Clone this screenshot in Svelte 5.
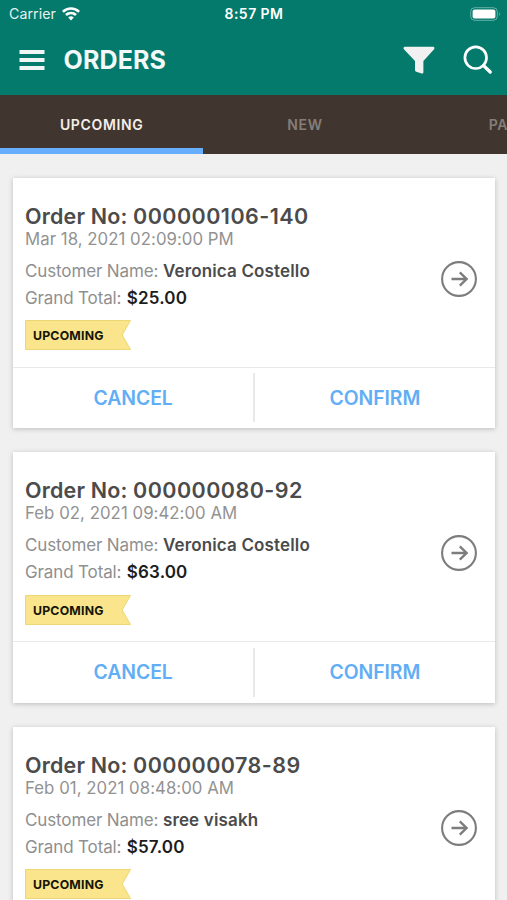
<script>
  const orders = [
    { no: '000000106-140', date: 'Mar 18, 2021 02:09:00 PM', name: 'Veronica Costello', total: '$25.00' },
    { no: '000000080-92', date: 'Feb 02, 2021 09:42:00 AM', name: 'Veronica Costello', total: '$63.00' },
    { no: '000000078-89', date: 'Feb 01, 2021 08:48:00 AM', name: 'sree visakh', total: '$57.00' }
  ];
</script>

<div class="screen">
  <header>
    <div class="status">
      <div class="carrier">
        <span>Carrier</span>
        <svg width="18" height="14" viewBox="0 0 18 14" fill="none" stroke="#fff" stroke-width="2.6">
          <path d="M.9 4.9a11.5 11.5 0 0 1 16.2 0" />
          <path d="M4 8a7.1 7.1 0 0 1 10 0" />
          <path d="M9 13.4 6.2 10.5a4 4 0 0 1 5.6 0z" fill="#fff" stroke="none" />
        </svg>
      </div>
      <div class="time">8:57 PM</div>
      <div class="battery">
        <svg width="31" height="14" viewBox="0 0 31 14">
          <rect x=".7" y=".7" width="26.6" height="12.6" rx="4" fill="none" stroke="#fff" stroke-opacity=".4" />
          <rect x="2.6" y="2.5" width="22.8" height="9" rx="2" fill="#fff" />
          <path d="M29 4.8q1.6 2.2 0 4.4z" fill="#fff" fill-opacity=".5" />
        </svg>
      </div>
    </div>
    <div class="bar">
      <svg class="menu" width="26" height="20" viewBox="0 0 26 20" fill="#eef5f4">
        <rect x=".5" y="0" width="25" height="4" /><rect x=".5" y="8" width="25" height="4" /><rect x=".5" y="16" width="25" height="4" />
      </svg>
      <h1>ORDERS</h1>
      <svg class="filter" width="32" height="28" viewBox="0 0 32 28" fill="#f1f1f1">
        <path d="M1.8.7h28.5c1.2 0 1.5 1.6.8 2.5L20.4 15v11c0 1.3-.8 1.8-1.8 1.5l-5.3-1.7c-.9-.3-1.3-.8-1.3-1.7V15L.9 3.2C.2 2.3.5.7 1.8.7z" />
      </svg>
      <svg class="search" width="30" height="30" viewBox="0 0 30 30" fill="none" stroke="#fff">
        <circle cx="12.7" cy="12.7" r="10.8" stroke-width="2.7" />
        <path d="m20.6 20.6 6.6 6.4" stroke-width="3.4" stroke-linecap="round" />
      </svg>
    </div>
  </header>

  <nav>
    <div class="tab active">UPCOMING</div>
    <div class="tab">NEW</div>
    <div class="tab">PAST</div>
  </nav>

  <main>
    {#each orders as order}
      <article>
        <div class="info">
          <div class="details">
            <h2>Order No: <span>{order.no}</span></h2>
            <p class="date">{order.date}</p>
            <p class="line">Customer Name: <b>{order.name}</b></p>
            <p class="line">Grand Total: <b class="total">{order.total}</b></p>
            <div class="ribbon">
              <svg width="107" height="30" viewBox="0 0 107 30">
                <path d="M.5.5h105l-8.3 14.5 8.3 14.5H.5z" fill="#fae58d" stroke="#ecd774" />
              </svg>
              <span>UPCOMING</span>
            </div>
          </div>
          <svg class="go" width="38" height="38" viewBox="0 0 38 38" fill="none" stroke="#7d7d7d">
            <circle cx="19" cy="19" r="16.9" stroke-width="2.1" />
            <path d="M11.5 19h15M19.8 12.4l6.8 6.6-6.8 6.6" stroke-width="2.4" />
          </svg>
        </div>
        <div class="actions">
          <button>CANCEL</button>
          <i></i>
          <button>CONFIRM</button>
        </div>
      </article>
    {/each}
  </main>
</div>

<style>
  .screen {
    width: 507px;
    height: 900px;
    overflow: hidden;
    background: #f0f0f0;
    font-family: Inter, "Liberation Sans", sans-serif;
    color: #4b4b4b;
  }
  svg { display: block; flex: none; }
  header { height: 95px; background: #037a6c; color: #fff; }
  .status { height: 27px; display: flex; justify-content: space-between; align-items: center; padding: 0 6px 0 9px; box-sizing: border-box; }
  .carrier, .battery { flex: 1; display: flex; align-items: center; }
  .carrier { gap: 6px; font-size: 14.2px; letter-spacing: 0.05px; color: #e5f3f1; }
  .battery { justify-content: flex-end; }
  .time { font-size: 14px; font-weight: 600; letter-spacing: 0.45px; margin-right: 2px; }
  .bar { height: 66px; display: flex; align-items: center; padding: 0 14px 0 19px; }
  h1 { margin: 0 auto 0 18.6px; font-size: 25px; line-height: 30px; font-weight: 650; letter-spacing: 0.1px; color: #f3f8f8; }
  .filter { margin-right: 28px; }
  nav { height: 58.5px; display: flex; background: #41362f; overflow: hidden; }
  .tab {
    flex: 0 0 203.3px;
    box-sizing: border-box;
    border-bottom: 6px solid transparent;
    padding-top: 6px;
    display: flex;
    align-items: center;
    justify-content: center;
    font-size: 14px;
    font-weight: 600;
    letter-spacing: 0.65px;
    color: #857e79;
  }
  .active { color: #f5eee9; border-color: #67affc; }
  main { padding: 24.3px 12px 0 13px; display: flex; flex-direction: column; gap: 24.2px; }
  article { flex: none; height: 250.3px; display: flex; flex-direction: column; background: #fff; box-shadow: 0 1px 5px rgba(0, 0, 0, 0.22); }
  .info { height: 190.1px; flex: none; display: flex; align-items: flex-start; justify-content: space-between; padding: 26px 17px 0 12px; border-bottom: 1.5px solid #e9e9e9; box-sizing: border-box; }
  h2 { margin: 0; font-size: 21.5px; line-height: 24px; font-weight: 600; letter-spacing: 0.17px; white-space: nowrap; }
  h2 span { letter-spacing: 0.45px; }
  p { margin: 0; font-size: 17px; white-space: nowrap; }
  .date { line-height: 23px; font-size: 16.8px; color: #929292; letter-spacing: 0.04px; }
  .line { line-height: 27px; color: #8f8f8f; letter-spacing: -0.13px; }
  .date + .line { margin-top: 7.2px; }
  b { font-weight: 600; color: #4b4b4b; letter-spacing: 0.15px; }
  .total { margin-left: 0.8px; color: #1c1c1c; }
  .ribbon { position: relative; margin-top: 8.1px; width: 107px; height: 30px; }
  .ribbon span { position: absolute; left: 8px; top: 1px; line-height: 30px; font-size: 12.3px; font-weight: 700; letter-spacing: 0.2px; color: #171507; }
  .go { margin-top: 55.8px; }
  .actions { flex: 1; display: flex; align-items: center; }
  button { flex: 1; padding: 0; border: 0; background: none; font: 600 19.4px/30px Inter, "Liberation Sans", sans-serif; letter-spacing: -0.05px; color: #62aef5; }
  i { width: 1.5px; height: 49px; background: #e9e9e9; }
</style>
